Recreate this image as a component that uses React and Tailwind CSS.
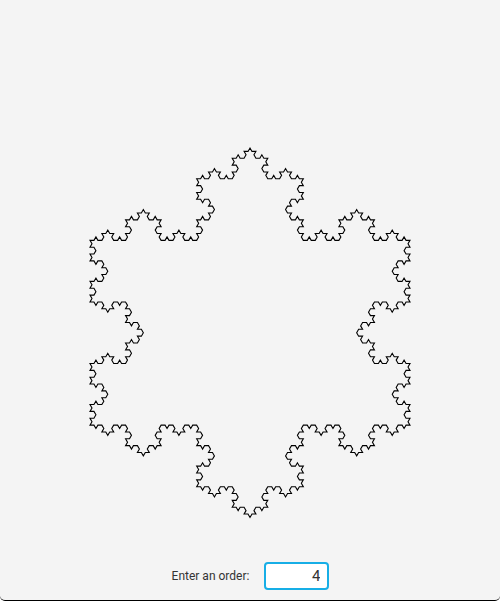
function kochPoints(order) {
  // triangle corners, clockwise from the top
  const a = [250, 148];
  const b = [410, 425.1];
  const c = [90, 425.1];
  const pts = [a];

  const side = (p1, p2, n) => {
    if (n === 0) {
      pts.push(p2);
      return;
    }
    const dx = p2[0] - p1[0];
    const dy = p2[1] - p1[1];
    const s = [p1[0] + dx / 3, p1[1] + dy / 3];
    const t = [p1[0] + (dx * 2) / 3, p1[1] + (dy * 2) / 3];
    const cos = Math.cos(Math.PI / 3);
    const sin = Math.sin(Math.PI / 3);
    const u = [
      s[0] + (t[0] - s[0]) * cos + (t[1] - s[1]) * sin,
      s[1] - (t[0] - s[0]) * sin + (t[1] - s[1]) * cos,
    ];
    side(p1, s, n - 1);
    side(s, u, n - 1);
    side(u, t, n - 1);
    side(t, p2, n - 1);
  };

  side(a, b, order);
  side(b, c, order);
  side(c, a, order);
  return pts.map((p) => p.join(",")).join(" ");
}

export default function App() {
  return (
    <div className="w-[500px] h-[601px] flex flex-col bg-[#f4f4f4] rounded-b-[5px] border-b border-black font-['Roboto',sans-serif] overflow-hidden">
      <svg className="w-[500px] h-[562px] shrink-0" viewBox="0 0 500 562">
        <polygon points={kochPoints(4)} fill="none" stroke="#000" strokeWidth="1.1" />
      </svg>
      <div className="flex items-center justify-center gap-[15px] pl-[1px]">
        <span className="text-[12px] text-[#333]">Enter an order:</span>
        <input
          readOnly
          value="4"
          className="w-[65px] h-[28px] pl-[8px] pr-[7px] text-right text-[15px] text-[#333] bg-white rounded-[4px] border-2 border-[#17aee6] outline-none"
        />
      </div>
    </div>
  );
}
